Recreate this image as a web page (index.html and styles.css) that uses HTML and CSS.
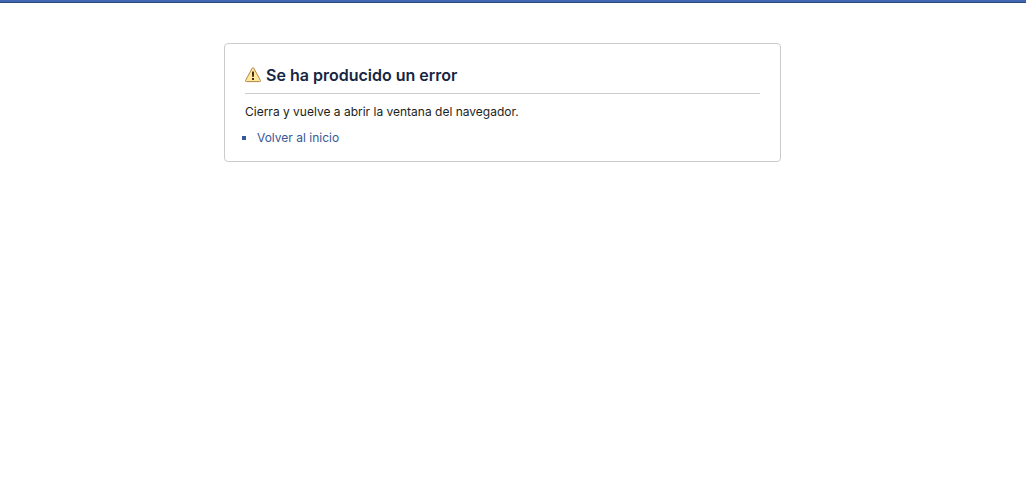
FILE: index.html
```html
<!DOCTYPE html>
<html lang="es">
<head>
  <meta charset="UTF-8">
  <title>Error</title>
  <link rel="stylesheet" href="styles.css">
</head>
<body>

  <div class="topbar"></div>

  <div class="page">
    <main class="error-box">
      <h1 class="error-title">
        <svg class="warning-icon" width="16" height="16" viewBox="0 0 16 16" aria-hidden="true">
          <path d="M7.2 1.2 Q8 0.2 8.8 1.2 L15.4 13.4 Q15.8 14.6 14.6 14.6 H1.4 Q0.2 14.6 0.6 13.4 Z" fill="#fdeaa0" stroke="#b98340"/>
          <path d="M7 4.6 H9 V8 L8.6 10 H7.4 L7 8 Z" fill="#4a2c12"/>
          <rect x="7" y="11" width="2" height="2" fill="#4a2c12"/>
        </svg>
        Se ha producido un error
      </h1>
      <p>Cierra y vuelve a abrir la ventana del navegador.</p>
      <ul class="links">
        <li><a href="#">Volver al inicio</a></li>
      </ul>
    </main>
  </div>

</body>
</html>
```
FILE: styles.css
```css
body {
  margin: 0;
  background: #fff;
  color: #1c1e21;
  font-family: Inter, sans-serif;
  font-size: 12px;
  line-height: 16px;
}
.topbar {
  height: 2px;
  background: #4267b2;
  border-bottom: 1px solid #29487d;
}
.page {
  padding: 40px 21px 40px 0;
}
.error-box {
  box-sizing: border-box;
  width: 557px;
  max-width: 90%;
  margin: 0 auto;
  padding: 20px 20px 15px;
  border: 1px solid #ccc;
  border-radius: 4px;
}
.error-title {
  display: flex;
  align-items: center;
  gap: 5px;
  margin: 0 0 10px;
  padding-bottom: 7px;
  border-bottom: 1px solid #ccc;
  color: #162643;
  font-size: 16px;
  font-weight: 600;
  line-height: 22px;
}
p {
  margin: 0 0 10px;
}
.links {
  margin: 0;
  padding-left: 12px;
  list-style: square;
  color: #385898;
}
.links a {
  color: #385898;
  text-decoration: none;
}
.links a:hover {
  text-decoration: underline;
}
```
